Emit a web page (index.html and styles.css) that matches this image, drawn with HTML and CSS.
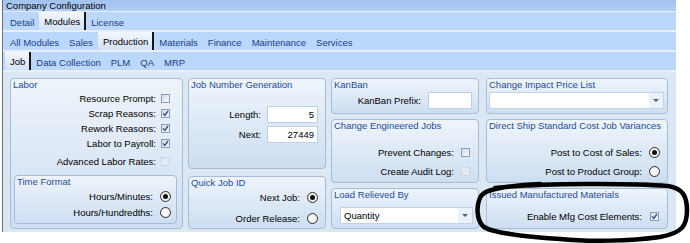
FILE: index.html
```html
<!DOCTYPE html>
<html>
<head>
<meta charset="utf-8">
<title>Company Configuration</title>
<link rel="stylesheet" href="styles.css">
</head>
<body>
<div class="window">
  <div class="titlebar">Company Configuration</div>
  <div class="strip s1">
    <span class="tab">Detail</span><span class="tab sel">Modules</span><span class="tab">License</span>
  </div>
  <div class="strip">
    <span class="tab">All Modules</span><span class="tab">Sales</span><span class="tab sel">Production</span><span class="tab">Materials</span><span class="tab">Finance</span><span class="tab">Maintenance</span><span class="tab">Services</span>
  </div>
  <div class="strip">
    <span class="tab sel">Job</span><span class="tab">Data Collection</span><span class="tab">PLM</span><span class="tab">QA</span><span class="tab">MRP</span>
  </div>
  <div class="content">
    <div class="col c1">
      <div class="panel labor">
        <div class="ptitle">Labor</div>
        <div class="row lrow"><span>Resource Prompt:</span><span class="cb"></span></div>
        <div class="row lrow"><span>Scrap Reasons:</span><span class="cb"><svg viewBox="0 0 7 7" width="7" height="7"><path d="M1 3.4 L2.8 5.4 L6 1" fill="none" stroke="#2c4c93" stroke-width="1.3"/></svg></span></div>
        <div class="row lrow"><span>Rework Reasons:</span><span class="cb"><svg viewBox="0 0 7 7" width="7" height="7"><path d="M1 3.4 L2.8 5.4 L6 1" fill="none" stroke="#2c4c93" stroke-width="1.3"/></svg></span></div>
        <div class="row lrow"><span>Labor to Payroll:</span><span class="cb"><svg viewBox="0 0 7 7" width="7" height="7"><path d="M1 3.4 L2.8 5.4 L6 1" fill="none" stroke="#2c4c93" stroke-width="1.3"/></svg></span></div>
        <div class="row lrow adv"><span>Advanced Labor Rates:</span><span class="cb dis"></span></div>
        <div class="panel nested">
          <div class="ptitle">Time Format</div>
          <div class="row trow"><span>Hours/Minutes:</span><span class="rd on"></span></div>
          <div class="row trow"><span>Hours/Hundredths:</span><span class="rd"></span></div>
        </div>
      </div>
    </div>
    <div class="col c2">
      <div class="panel jng">
        <div class="ptitle">Job Number Generation</div>
        <div class="jrows">
          <div class="row jrow"><span>Length:</span><span class="tb">5</span></div>
          <div class="row jrow"><span>Next:</span><span class="tb">27449</span></div>
        </div>
      </div>
      <div class="panel qj">
        <div class="ptitle">Quick Job ID</div>
        <div class="row qrow"><span>Next Job:</span><span class="rd on"></span></div>
        <div class="row qrow q2"><span>Order Release:</span><span class="rd"></span></div>
      </div>
    </div>
    <div class="col c3">
      <div class="panel kb">
        <div class="ptitle">KanBan</div>
        <div class="row krow"><span>KanBan Prefix:</span><span class="tb kbin"></span></div>
      </div>
      <div class="panel mid">
        <div class="ptitle">Change Engineered Jobs</div>
        <div class="mrows">
          <div class="row crow"><span>Prevent Changes:</span><span class="cb"></span></div>
          <div class="row crow"><span>Create Audit Log:</span><span class="cb dis"></span></div>
        </div>
      </div>
      <div class="panel low">
        <div class="ptitle">Load Relieved By</div>
        <div class="combo lcombo"><span class="ctext">Quantity</span><span class="carrow"><span class="tri"></span></span></div>
      </div>
    </div>
    <div class="col c4">
      <div class="panel kb">
        <div class="ptitle">Change Impact Price List</div>
        <div class="combo pcombo"><span class="ctext"></span><span class="carrow"><span class="tri"></span></span></div>
      </div>
      <div class="panel mid">
        <div class="ptitle">Direct Ship Standard Cost Job Variances</div>
        <div class="mrows">
          <div class="row drow"><span>Post to Cost of Sales:</span><span class="rd on"></span></div>
          <div class="row drow"><span>Post to Product Group:</span><span class="rd"></span></div>
        </div>
      </div>
      <div class="panel low">
        <div class="ptitle">Issued Manufactured Materials</div>
        <div class="row irow"><span>Enable Mfg Cost Elements:</span><span class="cb"><svg viewBox="0 0 7 7" width="7" height="7"><path d="M1 3.4 L2.8 5.4 L6 1" fill="none" stroke="#2c4c93" stroke-width="1.3"/></svg></span></div>
      </div>
    </div>
  </div>
</div>
<svg class="mark" width="690" height="243" viewBox="0 0 690 243">
  <path d="M495 188 C540 183, 630 183, 668 186 C683 188, 687 197, 687 210 C687 225, 683 233, 660 237 C630 241, 590 242, 560 239 C530 237, 495 234, 484 227 C476 220, 476 205, 481 196 C485 190, 500 186, 540 184" fill="none" stroke="#000" stroke-width="4.5" stroke-linecap="round" stroke-linejoin="round"/>
</svg>
</body>
</html>
```
FILE: styles.css
```css
* { box-sizing: border-box; }
html, body { margin: 0; padding: 0; background: #fff; }
body {
  font-family: "Liberation Sans", Arial, sans-serif;
  font-size: 9.5px;
  color: #000;
  width: 690px;
  height: 243px;
  overflow: hidden;
  position: relative;
}
.window {
  margin-left: 2px;
  width: 674px;
  border-left: 1px solid #66727f;
}
.titlebar {
  height: 11px;
  line-height: 11px;
  padding-left: 3px;
  background: linear-gradient(#a2c2ee, #b0cdf4);
  white-space: nowrap;
}
.strip {
  display: flex;
  height: 20px;
  border-top: 2px solid #e8eef5;
  background: #bbd7fc;
  padding-left: 2px;
}
.strip.s1 { height: 19px; border-top-width: 1px; }
.tab {
  padding: 3px 5px 0;
  line-height: 15px;
  color: #18408a;
  white-space: nowrap;
}
.tab.sel {
  color: #000;
  padding: 2px 4px 0 5px;
  border-right: 2px solid #161616;
  background: linear-gradient(#f3f7fd, #d2e2f7);
}
.content {
  display: flex;
  gap: 5px;
  height: 162px;
  padding: 6px 0 3px 7px;
  border-top: 2px solid #e8eef5;
  background: #dce7f4;
}
.col { display: flex; flex-direction: column; }
.c1 { width: 173px; }
.c2 { width: 138px; gap: 7px; }
.c3 { width: 148px; gap: 5px; }
.c4 { width: 182px; gap: 5px; margin-left: 2px; }

.panel {
  border: 1px solid #a8bdd5;
  border-radius: 4px;
  background: linear-gradient(#eef4fb, #cddef2);
}
.ptitle {
  height: 12px;
  line-height: 12px;
  padding-left: 2px;
  color: #1d4c98;
  white-space: nowrap;
}
.row {
  display: flex;
  justify-content: flex-end;
  align-items: center;
  white-space: nowrap;
}

/* Labor */
.labor { height: 151px; }
.lrow { height: 15px; padding-right: 12px; gap: 5px; }
.lrow.adv { margin-top: 3px; }
.nested { height: 49px; margin: 6px 5px 0 3px; }
.trow { height: 16px; padding-right: 5px; gap: 7px; }

/* Job number generation */
.jng { height: 91px; }
.jrows { margin-top: 13px; }
.jrow { height: 20px; padding-right: 7px; gap: 6px; }
.qj { height: 53px; }
.qrow { height: 16px; padding-right: 7px; gap: 7px; }
.qrow.q2 { margin-top: 5px; }

/* Kanban / price list */
.kb { height: 36px; }
.krow { height: 18px; padding-right: 6px; gap: 7px; }
.mid { height: 64px; }
.mrows { margin-top: 11px; }
.crow { height: 19px; padding-right: 8px; gap: 7px; }
.drow { height: 19px; padding-right: 7px; gap: 7px; }
.low { height: 41px; }
.irow { height: 19px; margin-top: 6px; padding-right: 8px; gap: 8px; }

/* Controls */
.tb {
  display: block;
  width: 51px;
  height: 17px;
  line-height: 15px;
  border: 1px solid #bfcfe2;
  background: #fff;
  text-align: right;
  padding-right: 3px;
}
.tb.kbin { width: 44px; }
.combo {
  display: flex;
  height: 17px;
  border: 1px solid #c2d1e3;
  background: #fff;
}
.lcombo { margin: 6px 5px 0 8px; }
.pcombo { margin: 1px 3px 0 2px; }
.ctext { flex: 1; line-height: 15px; padding-left: 3px; }
.carrow {
  width: 14px;
  display: flex;
  align-items: center;
  justify-content: center;
  background: #eaf1fa;
}
.tri {
  width: 0;
  height: 0;
  border-left: 3px solid transparent;
  border-right: 3px solid transparent;
  border-top: 3px solid #4b6088;
}
.cb {
  width: 9px;
  height: 9px;
  border: 1px solid #8b9eb8;
  background: linear-gradient(135deg, #d3dbe5, #f8fafc);
  display: flex;
  align-items: center;
  justify-content: center;
}
.cb.dis {
  border-color: #cbd5e1;
  background: #e3eaf3;
}
.rd {
  width: 11px;
  height: 11px;
  border: 1px solid #2f2f2f;
  border-radius: 50%;
  background: radial-gradient(#ffffff, #e6e6e6);
  display: flex;
  align-items: center;
  justify-content: center;
}
.rd.on::after {
  content: "";
  width: 5px;
  height: 5px;
  border-radius: 50%;
  background: #111;
}
.mark {
  position: absolute;
  left: 0;
  top: 0;
  pointer-events: none;
}
```
